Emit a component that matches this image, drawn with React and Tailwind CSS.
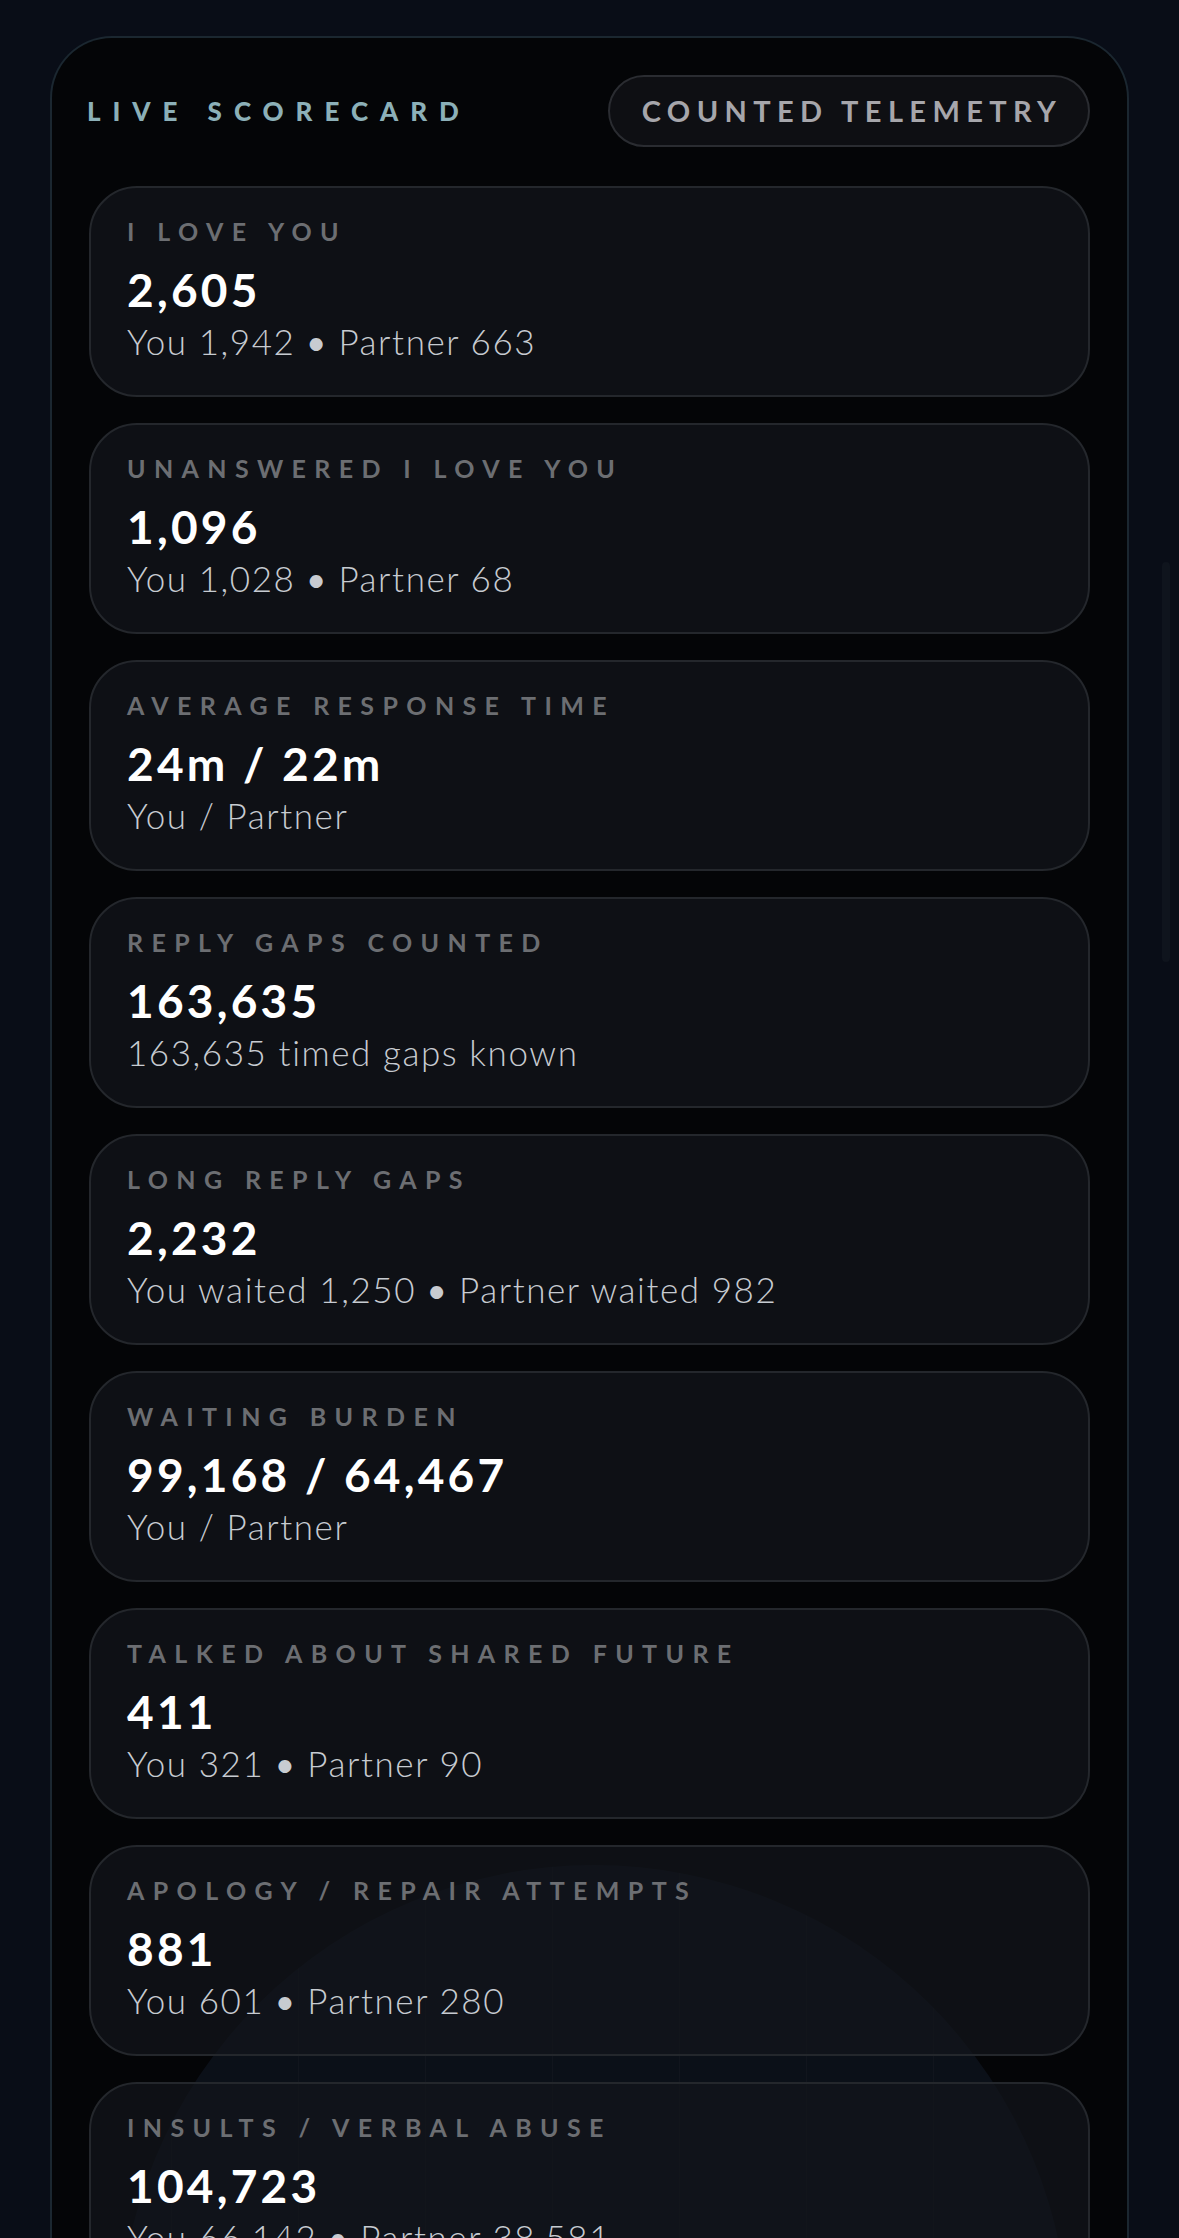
const stats = [
  { label: 'I Love You', value: '2,605', detail: 'You 1,942 • Partner 663' },
  { label: 'Unanswered I Love You', value: '1,096', detail: 'You 1,028 • Partner 68' },
  { label: 'Average Response Time', value: '24m / 22m', detail: 'You / Partner' },
  { label: 'Reply Gaps Counted', value: '163,635', detail: '163,635 timed gaps known' },
  { label: 'Long Reply Gaps', value: '2,232', detail: 'You waited 1,250 • Partner waited 982' },
  { label: 'Waiting Burden', value: '99,168 / 64,467', detail: 'You / Partner' },
  { label: 'Talked About Shared Future', value: '411', detail: 'You 321 • Partner 90' },
  { label: 'Apology / Repair Attempts', value: '881', detail: 'You 601 • Partner 280' },
  { label: 'Insults / Verbal Abuse', value: '104,723', detail: 'You 66,142 • Partner 38,581' },
]

function Detail({ text }) {
  const parts = text.split(' • ')
  return (
    <>
      {parts.map((p, i) => (
        <span key={i}>
          {i > 0 && <span className="font-normal"> • </span>}
          {p}
        </span>
      ))}
    </>
  )
}

function StatCard({ label, value, detail }) {
  return (
    <div className="relative rounded-[48px] border-2 border-[#24272c] bg-[#12151b]/70 px-[36px] pt-[28px] pb-[32px]">
      <div className="text-[25px] leading-[30px] font-bold uppercase tracking-[0.335em] text-[#6c6e72]">{label}</div>
      <div className="mt-4 text-[46px] leading-[56px] font-bold tracking-[0.07em] text-white">{value}</div>
      <div className="mt-px text-[35px] leading-[44px] font-light tracking-[0.045em] text-[#c7cbd1]">
        <Detail text={detail} />
      </div>
    </div>
  )
}

export default function App() {
  return (
    <div
      className="relative min-h-screen overflow-hidden bg-[#090d17] px-[50px] pt-[36px]"
      style={{ fontFamily: 'Lato, "Noto Sans", sans-serif' }}
    >
      <div className="absolute right-[9px] top-[562px] h-[400px] w-[8px] rounded-full bg-[#0f141d]" />

      <div className="relative overflow-hidden rounded-t-[62px] border-2 border-b-0 border-[#1b2730] bg-[#040507] px-[37px] pt-[37px] pb-[60px]">
        <div
          className="pointer-events-none absolute left-[67px] top-[1827px] h-[950px] w-[950px] rounded-full bg-[#111824]/60"
          style={{
            backgroundImage:
              'repeating-linear-gradient(90deg, rgba(255,255,255,0.025) 0px, rgba(255,255,255,0.025) 1px, transparent 1px, transparent 127px)',
            backgroundPosition: '52px 0',
          }}
        />

        <div className="relative flex items-center justify-between">
          <div className="-ml-[2px] text-[26px] leading-[30px] font-black uppercase tracking-[0.46em] text-[#8cb0b8]">
            Live Scorecard
          </div>
          <div className="flex h-[72px] w-[482px] items-center justify-center rounded-full border-2 border-[#2a2c31] bg-[#0e0f13] pl-[6px] text-[29px] font-bold uppercase tracking-[0.22em] text-[#a6a6ab]">
            Counted Telemetry
          </div>
        </div>

        <div className="relative mt-[39px] flex flex-col gap-[26px]">
          {stats.map((s) => (
            <StatCard key={s.label} {...s} />
          ))}
        </div>
      </div>
    </div>
  )
}
